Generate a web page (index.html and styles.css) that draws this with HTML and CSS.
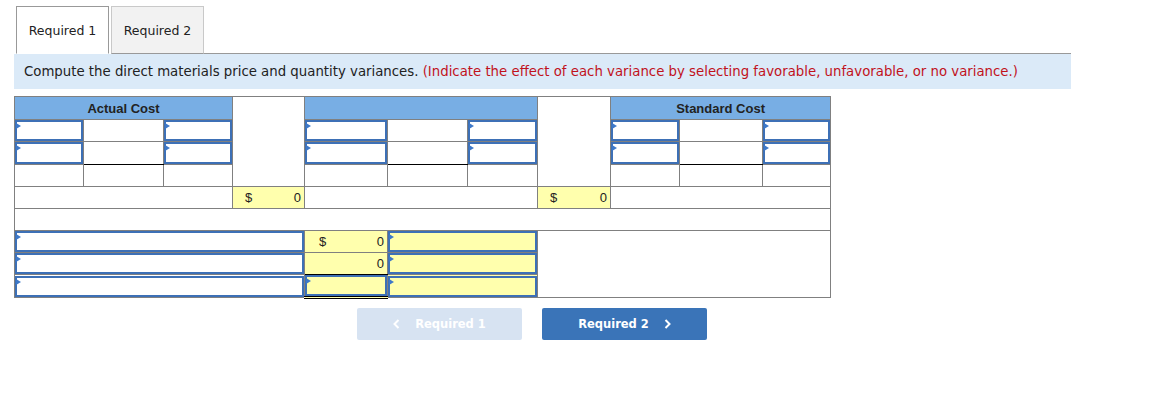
FILE: index.html
```html
<!DOCTYPE html>
<html>
<head>
<meta charset="utf-8">
<link rel="stylesheet" href="styles.css">
</head>
<body>
<div class="tabs">
  <div class="tab active">Required 1</div>
  <div class="tab">Required 2</div>
  <div class="tabfill"></div>
</div>
<div class="instr">Compute the direct materials price and quantity variances. <span class="red">(Indicate the effect of each variance by selecting favorable, unfavorable, or no variance.)</span></div>

<table class="grid">
  <colgroup>
    <col class="w69"><col class="w80"><col class="w69"><col class="w72">
    <col class="w83"><col class="w80"><col class="w70"><col class="w73">
    <col class="w69"><col class="w83"><col class="w68">
  </colgroup>
  <tr class="rh">
    <td colspan="3" class="hd">Actual Cost</td>
    <td rowspan="4"></td>
    <td colspan="3" class="hd"></td>
    <td rowspan="4"></td>
    <td colspan="3" class="hd">Standard Cost</td>
  </tr>
  <tr class="r22">
    <td class="ic"><div class="inp"></div></td><td></td><td class="ic"><div class="inp"></div></td>
    <td class="ic"><div class="inp"></div></td><td></td><td class="ic"><div class="inp"></div></td>
    <td class="ic"><div class="inp"></div></td><td></td><td class="ic"><div class="inp"></div></td>
  </tr>
  <tr class="r23">
    <td class="ic"><div class="inp"></div></td><td class="ul"></td><td class="ic"><div class="inp"></div></td>
    <td class="ic"><div class="inp"></div></td><td class="ul"></td><td class="ic"><div class="inp"></div></td>
    <td class="ic"><div class="inp"></div></td><td class="ul"></td><td class="ic"><div class="inp"></div></td>
  </tr>
  <tr class="r22">
    <td></td><td></td><td></td>
    <td></td><td></td><td></td>
    <td></td><td></td><td></td>
  </tr>
  <tr class="r22">
    <td colspan="3"></td>
    <td class="yl"><div class="amt"><span>$</span><span>0</span></div></td>
    <td colspan="3"></td>
    <td class="yl"><div class="amt"><span>$</span><span>0</span></div></td>
    <td colspan="3"></td>
  </tr>
  <tr class="r22">
    <td colspan="11"></td>
  </tr>
  <tr class="r22">
    <td colspan="4" class="ic"><div class="inp"></div></td>
    <td class="yl"><div class="amt amt2"><span>$</span><span>0</span></div></td>
    <td colspan="2" class="ic yl"><div class="inp"></div></td>
    <td colspan="4" rowspan="3"></td>
  </tr>
  <tr class="r22">
    <td colspan="4" class="ic"><div class="inp"></div></td>
    <td class="yl ul"><div class="amt amt2"><span></span><span>0</span></div></td>
    <td colspan="2" class="ic yl"><div class="inp"></div></td>
  </tr>
  <tr class="r22 last">
    <td colspan="4" class="ic"><div class="inp"></div></td>
    <td class="ic yl dul"><div class="inp"></div></td>
    <td colspan="2" class="ic yl"><div class="inp"></div></td>
  </tr>
</table>

<div class="nav">
  <button class="btn disabled"><svg class="chev" width="7" height="10" viewBox="0 0 7 10"><polyline points="5.5,1 1.5,5 5.5,9" fill="none" stroke="#fff" stroke-width="2"/></svg>Required 1</button>
  <button class="btn primary">Required 2<svg class="chev right" width="7" height="10" viewBox="0 0 7 10"><polyline points="1.5,1 5.5,5 1.5,9" fill="none" stroke="#fff" stroke-width="2"/></svg></button>
</div>
</body>
</html>
```

FILE: styles.css
```css
body {
  margin: 0;
  font-family: "DejaVu Sans", Verdana, sans-serif;
  color: #222;
  background: #fff;
}

.tabs {
  display: flex;
  align-items: flex-end;
  margin: 6px 0 0 16px;
  width: 1055px;
}
.tab {
  box-sizing: border-box;
  width: 93px;
  height: 48px;
  display: flex;
  align-items: center;
  justify-content: center;
  font-size: 12.5px;
  color: #222;
  border: 1px solid #c9c9c9;
  border-bottom: 1px solid #999;
  background: #f2f2f2;
  margin-right: 2px;
}
.tab.active {
  background: #fff;
  border-color: #999;
  border-bottom: 1px solid #fff;
}
.tabfill {
  flex: 1;
  border-bottom: 1px solid #999;
  margin-left: -2px;
}

.instr {
  box-sizing: border-box;
  margin-left: 14px;
  width: 1057px;
  height: 35px;
  background: #dbeaf8;
  padding: 0 0 0 10px;
  display: flex;
  align-items: center;
  font-size: 13.3px;
  white-space: pre;
  color: #222;
}
.red { color: #c1121c; }

.grid {
  margin: 7px 0 0 14px;
  border-collapse: collapse;
  table-layout: fixed;
  width: 817px;
  font-family: "Liberation Sans", Arial, sans-serif;
  font-size: 13px;
}
.w68 { width: 68px; } .w69 { width: 69px; } .w70 { width: 70px; }
.w72 { width: 72px; } .w73 { width: 73px; } .w80 { width: 80px; }
.w83 { width: 83px; }

.grid td {
  border: 1px solid #808080;
  padding: 0;
  vertical-align: middle;
}
.rh td { height: 22px; }
.r22 > td { height: 21px; }
.r23 > td { height: 22px; }
.grid td.hd {
  background: #78aee4;
  text-align: center;
  font-weight: bold;
  color: #222;
  vertical-align: top;
  padding-top: 4px;
  height: 18px;
}
.grid td.ul { border-bottom: 1px solid #000; }
.grid td.dul { border-bottom: 3px double #000; }
.yl { background: #ffffad; }

.inp {
  position: relative;
  box-sizing: border-box;
  height: 21px;
  border: 2px solid #3d70b6;
}
.r23 .inp { height: 22px; }
.inp::before {
  content: "";
  position: absolute;
  left: -1px;
  top: 1px;
  border-left: 5px solid #3d78c8;
  border-top: 3.5px solid transparent;
  border-bottom: 3.5px solid transparent;
}

.amt {
  display: flex;
  justify-content: space-between;
  padding: 0 3px 0 12px;
  color: #222;
}
.amt2 { padding-left: 14px; }

.nav {
  display: flex;
  gap: 20px;
  margin: 9px 0 0 357px;
}
.btn {
  box-sizing: border-box;
  width: 165px;
  height: 32px;
  border: none;
  border-radius: 2px;
  font-family: "DejaVu Sans", Verdana, sans-serif;
  font-weight: bold;
  font-size: 11.5px;
  color: #fff;
  display: flex;
  align-items: center;
  justify-content: center;
  padding: 0;
}
.btn.disabled { background: #d7e3f2; }
.btn.primary { background: #3a74b8; }
.chev { margin-right: 15px; }
.chev.right { margin-right: 0; margin-left: 15px; }
```
